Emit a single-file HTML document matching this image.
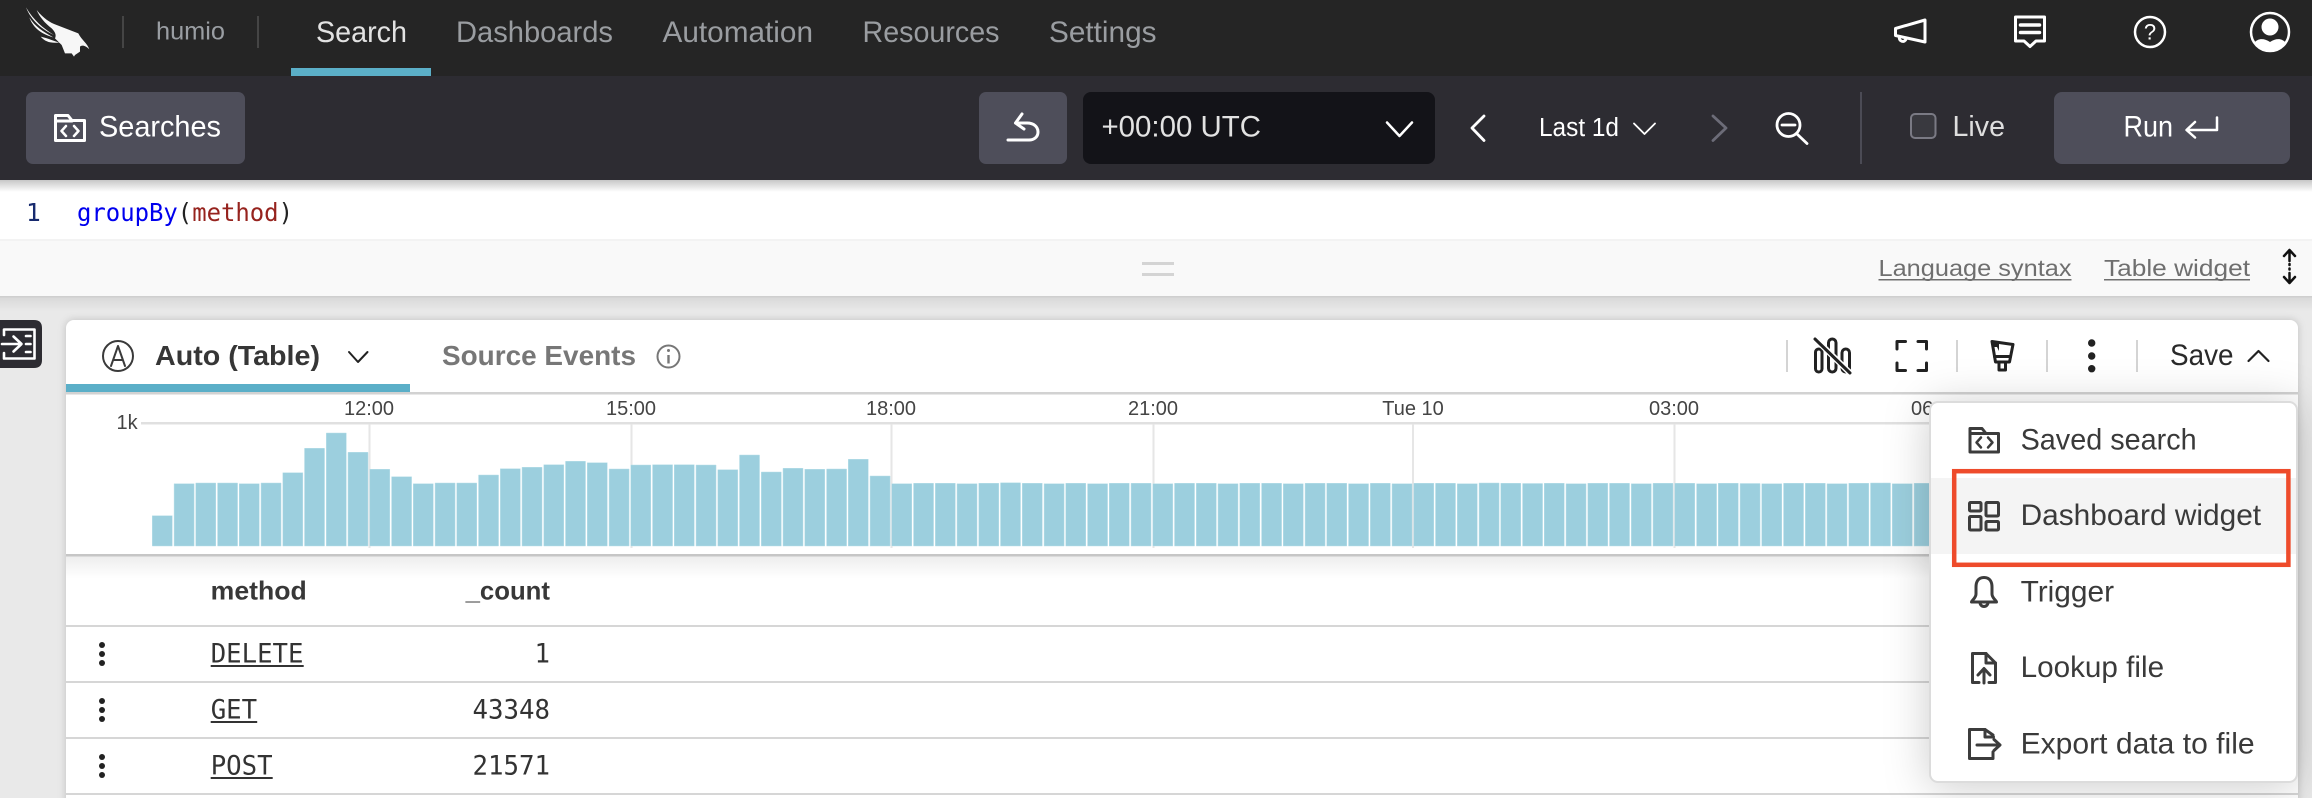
<!DOCTYPE html>
<html lang="en">
<head>
<meta charset="utf-8">
<title>Humio search</title>
<style>
html,body{margin:0;padding:0;width:2312px;height:798px;overflow:hidden;background:#e9e9e9}
svg{display:block}
text{font-family:"Liberation Sans",Arial,sans-serif}
.m{font-family:"DejaVu Sans Mono","Liberation Mono",monospace}
.ic{fill:none;stroke-linecap:round;stroke-linejoin:round}
</style>
</head>
<body>
<svg xmlns="http://www.w3.org/2000/svg" width="2312" height="798" viewBox="0 0 2312 798">
<defs>
<linearGradient id="sd" x1="0" y1="0" x2="0" y2="1"><stop offset="0" stop-color="#000" stop-opacity=".22"/><stop offset="1" stop-color="#000" stop-opacity="0"/></linearGradient>
<linearGradient id="sd2" x1="0" y1="0" x2="0" y2="1"><stop offset="0" stop-color="#000" stop-opacity=".07"/><stop offset="1" stop-color="#000" stop-opacity="0"/></linearGradient>
</defs>

<!-- page -->
<rect width="2312" height="798" fill="#e9e9e9"/>

<!-- top nav -->
<rect width="2312" height="76" fill="#252525"/>
<g transform="scale(.3333)" fill="#f7f7f7">
<path d="M78 22C100 60 130 85 162 105 130 90 95 65 78 22Z"/>
<path d="M88 52C105 80 130 95 160 112 125 102 100 85 88 52Z"/>
<path d="M110 30C130 55 150 68 170 75L235 100C245 120 262 130 268 148 255 135 245 135 240 140L240 155 225 165 222 170 215 160 195 160 185 135 165 115C170 105 165 95 155 85 135 70 118 50 110 30Z"/>
<path d="M122 110C145 115 165 125 185 130L175 128C150 130 135 125 122 110Z"/>
</g>
<rect x="122" y="16" width="2" height="32" fill="#454545"/>
<rect x="257" y="16" width="2" height="32" fill="#454545"/>
<text x="156" y="39.500" font-size="25" fill="#9a9ea3" textLength="69" lengthAdjust="spacingAndGlyphs">humio</text>
<text x="316" y="42" font-size="29.500" fill="#e2e2e2" textLength="91" lengthAdjust="spacingAndGlyphs">Search</text>
<text x="456" y="42" font-size="29.500" fill="#9a9da1" textLength="157" lengthAdjust="spacingAndGlyphs">Dashboards</text>
<text x="662.500" y="42" font-size="29.500" fill="#9a9da1" textLength="150.500" lengthAdjust="spacingAndGlyphs">Automation</text>
<text x="862.500" y="42" font-size="29.500" fill="#9a9da1" textLength="137" lengthAdjust="spacingAndGlyphs">Resources</text>
<text x="1049" y="42" font-size="29.500" fill="#9a9da1" textLength="107.500" lengthAdjust="spacingAndGlyphs">Settings</text>
<rect x="291" y="68" width="140" height="8" fill="#5bafc8"/>

<g class="ic" stroke="#fff" stroke-width="3">
<path d="M1895.500 28.500L1925 20V42L1895.500 35.500Z"/>
<path d="M1899.500 37A3.400 3.400 0 0 0 1906 39"/>
<path d="M2015.500 17H2044.500V41H2036L2030 46.500 2024 41H2015.500Z"/>
<path d="M2020.500 25H2039.500M2020.500 32.500H2039.500" stroke-width="3.500"/>
<circle cx="2150" cy="32" r="15" stroke-width="2.500"/>
<circle cx="2270" cy="32" r="19" stroke-width="2.500"/>
</g>
<text x="2150" y="39.500" font-size="22" fill="#fff" text-anchor="middle">?</text>
<circle cx="2270" cy="27" r="8.500" fill="#fff"/>
<path d="M2254 43C2258 38 2264 38 2270 42 2276 38 2282 38 2286 43A19.500 19.500 0 0 1 2254 43Z" fill="#fff"/>

<!-- toolbar -->
<rect y="76" width="2312" height="104" fill="#2d2c32"/>
<rect x="26" y="92" width="219" height="72" rx="7" fill="#4e4e5a"/>
<g class="ic" stroke="#fff" stroke-width="3">
<path d="M55.500 140.500V115.500H68L72 120.500H84.500V140.500Z"/>
<path d="M55.500 121H72"/>
<path d="M66 126L61.500 131 66 136M74 126L78.500 131 74 136" stroke-width="2.500"/>
</g>
<text x="99" y="136.500" font-size="29.500" fill="#fff" textLength="122" lengthAdjust="spacingAndGlyphs">Searches</text>

<rect x="979" y="92" width="88" height="72" rx="7" fill="#4e4e5a"/>
<path class="ic" stroke="#fff" stroke-width="3" d="M1022 114L1015.500 123 1024 129M1015.500 123H1027C1034 123 1038 127 1038 132 1038 137 1034 140 1029 140H1008"/>
<rect x="1083" y="92" width="352" height="72" rx="8" fill="#131318"/>
<text x="1101.500" y="136.500" font-size="29.500" fill="#e2e2e2" textLength="159.500" lengthAdjust="spacingAndGlyphs">+00:00 UTC</text>
<path class="ic" stroke="#fff" stroke-width="2.500" d="M1387 122.500L1399.500 136 1412 122.500"/>
<path class="ic" stroke="#fff" stroke-width="2.800" d="M1484 116L1472 128 1484 140.500"/>
<text x="1539" y="136" font-size="25.500" fill="#fff" textLength="80" lengthAdjust="spacingAndGlyphs">Last 1d</text>
<path class="ic" stroke="#fff" stroke-width="1.800" d="M1634 123.500L1644.500 134 1655 123.500"/>
<path class="ic" stroke="#6c6c78" stroke-width="2.800" d="M1713 116L1726 128 1713 140.500"/>
<g class="ic" stroke="#fff" stroke-width="2.800">
<circle cx="1788.500" cy="125" r="11.500"/>
<path d="M1797 134L1807 143.500"/>
<path d="M1782 125H1795"/>
</g>
<rect x="1860" y="92" width="2" height="72" fill="#4b4b55"/>
<rect x="1911" y="114" width="24.500" height="24" rx="4" fill="#39393f" stroke="#7a7a84" stroke-width="2"/>
<text x="1952.500" y="136" font-size="28.500" fill="#dedede" textLength="52.500" lengthAdjust="spacingAndGlyphs">Live</text>
<rect x="2054" y="92" width="236" height="72" rx="8" fill="#4e4e5a"/>
<text x="2123.500" y="136.500" font-size="29.500" fill="#fff" textLength="49.500" lengthAdjust="spacingAndGlyphs">Run</text>
<path class="ic" stroke="#fff" stroke-width="2.500" d="M2217 117.500V130H2187M2195 122L2186.500 130 2195 137.500"/>

<!-- editor -->
<rect y="180" width="2312" height="61" fill="#fff"/>
<rect y="180" width="2312" height="12" fill="url(#sd)"/>
<text class="m" x="26" y="221" font-size="24.500" fill="#172a6e">1</text>
<text class="m" x="77" y="221" font-size="24.500" textLength="216" lengthAdjust="spacingAndGlyphs"><tspan fill="#0000ee">groupBy</tspan><tspan fill="#222">(</tspan><tspan fill="#96231e">method</tspan><tspan fill="#222">)</tspan></text>

<!-- editor footer -->
<rect y="241" width="2312" height="55" fill="#f9f9f9"/>
<rect y="239" width="2312" height="2" fill="#f3f3f3"/>
<rect x="1142" y="262" width="32" height="3" fill="#d4d4d4"/>
<rect x="1142" y="273" width="32" height="3" fill="#d4d4d4"/>
<text x="1878.500" y="276" font-size="23" fill="#6f6f6f" textLength="193" lengthAdjust="spacingAndGlyphs">Language syntax</text>
<rect x="1878.500" y="279" width="193" height="1.500" fill="#6f6f6f"/>
<text x="2104" y="276" font-size="23" fill="#6f6f6f" textLength="146" lengthAdjust="spacingAndGlyphs">Table widget</text>
<rect x="2104" y="279" width="146" height="1.500" fill="#6f6f6f"/>
<g class="ic" stroke="#111" stroke-width="2.500">
<path d="M2289.500 250V261M2284 256L2289.500 250 2295 256"/>
<path d="M2289.500 264V265M2289.500 268.500V269.500"/>
<path d="M2289.500 273V283M2284 277L2289.500 283 2295 277"/>
</g>
<rect y="296" width="2312" height="1.500" fill="#cfcfcf"/>
<rect y="297.500" width="2312" height="14" fill="url(#sd2)"/>

<!-- side toggler -->
<path d="M0 320H34Q42 320 42 328V360Q42 368 34 368H0Z" fill="#2d2c32"/>
<g class="ic" stroke="#fff" stroke-width="2.600">
<path d="M4 335V329.500H34.500V358.500H4V353"/>
<path d="M2 344H20M13.500 336.500L21.500 344 13.500 351.500"/>
<path d="M26 336H30.500M26 344H30.500M26 352H30.500"/>
</g>

<!-- panel -->
<rect x="66" y="320" width="2232" height="490" rx="8" fill="#fff" style="filter:drop-shadow(0 0 4px rgba(0,0,0,.18))"/>

<rect x="66" y="384" width="344" height="8" fill="#5bafc8"/>
<rect x="66" y="392" width="2232" height="2.500" fill="#d2d2d2"/>
<g class="ic" stroke="#3a3a3a" stroke-width="2">
<circle cx="118" cy="356" r="15"/>
<path d="M111 366L118 346 125 366M113.500 360H122.500"/>
</g>
<text x="155" y="365" font-size="28" font-weight="bold" fill="#363636" textLength="165" lengthAdjust="spacingAndGlyphs">Auto (Table)</text>
<path class="ic" stroke="#222" stroke-width="2" d="M349 352L358 362 367.500 352"/>
<text x="442" y="365" font-size="28" font-weight="bold" fill="#777" textLength="194" lengthAdjust="spacingAndGlyphs">Source Events</text>
<circle cx="668.500" cy="356.500" r="11" fill="none" stroke="#777" stroke-width="2"/>
<path d="M668.500 355V363.500" stroke="#777" stroke-width="2.400"/>
<circle cx="668.500" cy="350.500" r="1.500" fill="#777"/>

<!-- panel actions -->
<g fill="#d4d4d4">
<rect x="1786" y="340" width="2" height="32"/>
<rect x="1956" y="340" width="2" height="32"/>
<rect x="2046" y="340" width="2" height="32"/>
<rect x="2136" y="340" width="2" height="32"/>
</g>
<g class="ic" stroke="#222" stroke-width="3">
<rect x="1815.500" y="349" width="6.500" height="23" rx="3.250"/>
<rect x="1828.500" y="339" width="7.500" height="33" rx="3.750"/>
<rect x="1842" y="349" width="7.500" height="23" rx="3.750"/>
<path d="M1816 339.500L1850 373" stroke="#fff" stroke-width="6"/>
<path d="M1815 339L1850 373"/>
<path d="M1897 349V341.500H1905.500M1918 341.500H1926.500V349M1926.500 363V370.500H1918M1905.500 370.500H1897V363"/>
<path d="M1992 341.500L2013 344.500 2009.500 362H1995.500Z"/>
<path d="M1994.500 356.500H2010.500"/>
<path d="M1999 362V370H2005.500V362"/>
</g>
<path d="M1992.500 342L2005 344 1999 344V351L1997 347 1994 347Z" fill="#222"/>
<circle cx="2091.700" cy="343" r="3.700" fill="#222"/>
<circle cx="2091.700" cy="356" r="3.700" fill="#222"/>
<circle cx="2091.700" cy="368.700" r="3.700" fill="#222"/>
<text x="2170" y="365" font-size="29.500" fill="#2a2a2a" textLength="63.500" lengthAdjust="spacingAndGlyphs">Save</text>
<path class="ic" stroke="#222" stroke-width="2.200" d="M2248.500 361L2258.500 351 2268.500 361"/>

<!-- chart -->
<g fill="#444" font-size="20">
<text x="369" y="415" text-anchor="middle">12:00</text>
<text x="631" y="415" text-anchor="middle">15:00</text>
<text x="891" y="415" text-anchor="middle">18:00</text>
<text x="1153" y="415" text-anchor="middle">21:00</text>
<text x="1413" y="415" text-anchor="middle">Tue 10</text>
<text x="1674" y="415" text-anchor="middle">03:00</text>
<text x="1911" y="415">06:00</text>
<text x="116.500" y="429">1k</text>
</g>
<rect x="141" y="422" width="2157" height="2.500" fill="#e0e0e0"/>
<g fill="#e6e6e6">
<rect x="368.500" y="424" width="2" height="124"/>
<rect x="630.500" y="424" width="2" height="124"/>
<rect x="890.500" y="424" width="2" height="124"/>
<rect x="1152.500" y="424" width="2" height="124"/>
<rect x="1412" y="424" width="2" height="124"/>
<rect x="1673.500" y="424" width="2" height="124"/>
</g>
<path transform="translate(152.300 0) scale(.99954 1) translate(-152.300 0)" fill="#9ccfde" stroke="#b9dfe9" stroke-width=".5" d="M152.300 515.700h20V546h-20zM174.100 483.700h20V546h-20zM195.800 483h20V546h-20zM217.600 483h20V546h-20zM239.300 483.700h20V546h-20zM261.100 483h20V546h-20zM282.900 472.700h20V546h-20zM304.600 448.300h20V546h-20zM326.400 433h20V546h-20zM348.100 452.300h20V546h-20zM369.900 469.300h20V546h-20zM391.700 476.700h20V546h-20zM413.400 483.700h20V546h-20zM435.200 483h20V546h-20zM456.900 483h20V546h-20zM478.700 475h20V546h-20zM500.500 468.700h20V546h-20zM522.200 467.300h20V546h-20zM544 464.700h20V546h-20zM565.700 461.300h20V546h-20zM587.500 462.700h20V546h-20zM609.300 469h20V546h-20zM631 465h20V546h-20zM652.800 464.700h20V546h-20zM674.500 464.700h20V546h-20zM696.300 465h20V546h-20zM718.100 469.700h20V546h-20zM739.800 455h20V546h-20zM761.600 472h20V546h-20zM783.300 468.300h20V546h-20zM805.100 469.300h20V546h-20zM826.900 469h20V546h-20zM848.600 459.300h20V546h-20zM870.400 476h20V546h-20zM892.100 483.700h20V546h-20zM913.900 483.300h20V546h-20zM935.700 483.300h20V546h-20zM957.400 483.700h20V546h-20zM979.200 483.300h20V546h-20zM1000.900 482.800h20V546h-20zM1022.700 483.300h20V546h-20zM1044.500 483.700h20V546h-20zM1066.200 483.300h20V546h-20zM1088 483.700h20V546h-20zM1109.700 483.300h20V546h-20zM1131.500 483.300h20V546h-20zM1153.300 483.700h20V546h-20zM1175 483.300h20V546h-20zM1196.800 483.300h20V546h-20zM1218.500 483.700h20V546h-20zM1240.300 483.300h20V546h-20zM1262.100 483.300h20V546h-20zM1283.800 483.700h20V546h-20zM1305.600 483.300h20V546h-20zM1327.300 483.300h20V546h-20zM1349.100 483.700h20V546h-20zM1370.900 483.300h20V546h-20zM1392.600 483.700h20V546h-20zM1414.400 483.300h20V546h-20zM1436.100 483.300h20V546h-20zM1457.900 483.700h20V546h-20zM1479.700 483h20V546h-20zM1501.400 483.300h20V546h-20zM1523.200 483.500h20V546h-20zM1544.900 483.300h20V546h-20zM1566.700 483.700h20V546h-20zM1588.500 483.300h20V546h-20zM1610.200 483.300h20V546h-20zM1632 483.700h20V546h-20zM1653.700 483.300h20V546h-20zM1675.500 483.300h20V546h-20zM1697.300 483.700h20V546h-20zM1719 483.300h20V546h-20zM1740.800 483.500h20V546h-20zM1762.500 483.700h20V546h-20zM1784.300 483.300h20V546h-20zM1806.100 483.300h20V546h-20zM1827.800 483.700h20V546h-20zM1849.600 483.300h20V546h-20zM1871.300 483h20V546h-20zM1893.100 483.700h20V546h-20zM1914.900 483.300h20V546h-20z"/>
<rect x="66" y="554" width="2232" height="2.500" fill="#c6c6c6"/>
<rect x="66" y="556.500" width="2232" height="22" fill="url(#sd2)"/>

<!-- table -->
<text x="210.700" y="599.500" font-size="26" font-weight="bold" fill="#383838" textLength="96" lengthAdjust="spacingAndGlyphs">method</text>
<text x="465.600" y="599.500" font-size="26" font-weight="bold" fill="#383838" textLength="84.400" lengthAdjust="spacingAndGlyphs">_count</text>
<g fill="#d6d6d6">
<rect x="66" y="625" width="2232" height="2"/>
<rect x="66" y="681" width="2232" height="2"/>
<rect x="66" y="737" width="2232" height="2"/>
<rect x="66" y="793" width="2232" height="2"/>
</g>
<g fill="#222">
<circle cx="102" cy="645" r="3"/><circle cx="102" cy="654" r="3"/><circle cx="102" cy="663" r="3"/>
<circle cx="102" cy="701" r="3"/><circle cx="102" cy="710" r="3"/><circle cx="102" cy="719" r="3"/>
<circle cx="102" cy="757" r="3"/><circle cx="102" cy="766" r="3"/><circle cx="102" cy="775" r="3"/>
</g>
<g class="m" fill="#333" font-size="26.500">
<text class="m" x="210.700" y="662.500" textLength="92.800" lengthAdjust="spacingAndGlyphs">DELETE</text>
<text class="m" x="210.700" y="718.500" textLength="46.400" lengthAdjust="spacingAndGlyphs">GET</text>
<text class="m" x="210.700" y="774.500" textLength="61.900" lengthAdjust="spacingAndGlyphs">POST</text>
<text class="m" x="534.500" y="662.500" textLength="15.500" lengthAdjust="spacingAndGlyphs">1</text>
<text class="m" x="472.500" y="718.500" textLength="77.500" lengthAdjust="spacingAndGlyphs">43348</text>
<text class="m" x="472.500" y="774.500" textLength="77.500" lengthAdjust="spacingAndGlyphs">21571</text>
</g>
<g fill="#333">
<rect x="210.700" y="665" width="93" height="2"/>
<rect x="210.700" y="721" width="46.500" height="2"/>
<rect x="210.700" y="777" width="62" height="2"/>
</g>

<!-- menu -->
<rect x="1930" y="402" width="367" height="380" rx="8" fill="#fff" stroke="#dcdcdc" stroke-width="2" style="filter:drop-shadow(0 4px 22px rgba(0,0,0,.2))"/>
<rect x="1931" y="478" width="365" height="76" fill="#f4f4f4"/>
<g fill="#3a3a3a" font-size="29.500">
<text x="2020.600" y="449.300" textLength="176" lengthAdjust="spacingAndGlyphs">Saved search</text>
<text x="2020.600" y="525" textLength="240.500" lengthAdjust="spacingAndGlyphs">Dashboard widget</text>
<text x="2020.600" y="601.500" textLength="93.500" lengthAdjust="spacingAndGlyphs">Trigger</text>
<text x="2020.600" y="677" textLength="143.500" lengthAdjust="spacingAndGlyphs">Lookup file</text>
<text x="2020.600" y="753.300" textLength="234" lengthAdjust="spacingAndGlyphs">Export data to file</text>
</g>
<g class="ic" stroke="#3c3c3c" stroke-width="3">
<path d="M1970 452V428.500H1982L1986 433.500H1998.500V452Z"/>
<path d="M1970 433.500H1986"/>
<path d="M1981 437.500L1976.500 442.500 1981 447.500M1988 437.500L1992.500 442.500 1988 447.500" stroke-width="2.500"/>
<rect x="1969.500" y="502.500" width="11.500" height="8.500" rx="1"/>
<rect x="1969.500" y="516.500" width="11.500" height="13.500" rx="1"/>
<rect x="1986" y="502.500" width="12.500" height="13.500" rx="1"/>
<rect x="1986" y="521.500" width="12.500" height="8.500" rx="1"/>
<path d="M1984 577.500C1978 577.500 1976 582 1976 587V594C1976 598 1972 600 1971.500 602H1996.500C1996 600 1992 598 1992 594V587C1992 582 1990 577.500 1984 577.500Z"/>
<path d="M1980 602.500A4 4 0 0 0 1988 602.500"/>
<path d="M1979 682.500H1972.500V653.500H1986L1995.500 663V682.500H1989"/>
<path d="M1986 653.500V663H1995.500"/>
<path d="M1984 683V669M1978 675L1984 668.500 1990 675"/>
<path d="M1993 735L1985 729.500H1969.500V758.500H1993V752"/>
<path d="M1985 729.500V737H1993.500"/>
<path d="M1977 745H1999M1994 739.500L2000 745 1994 750.500"/>
</g>
<rect x="1954.200" y="471.200" width="334.200" height="93.600" fill="none" stroke="#ee4b2b" stroke-width="4.500"/>
</svg>
</body>
</html>
